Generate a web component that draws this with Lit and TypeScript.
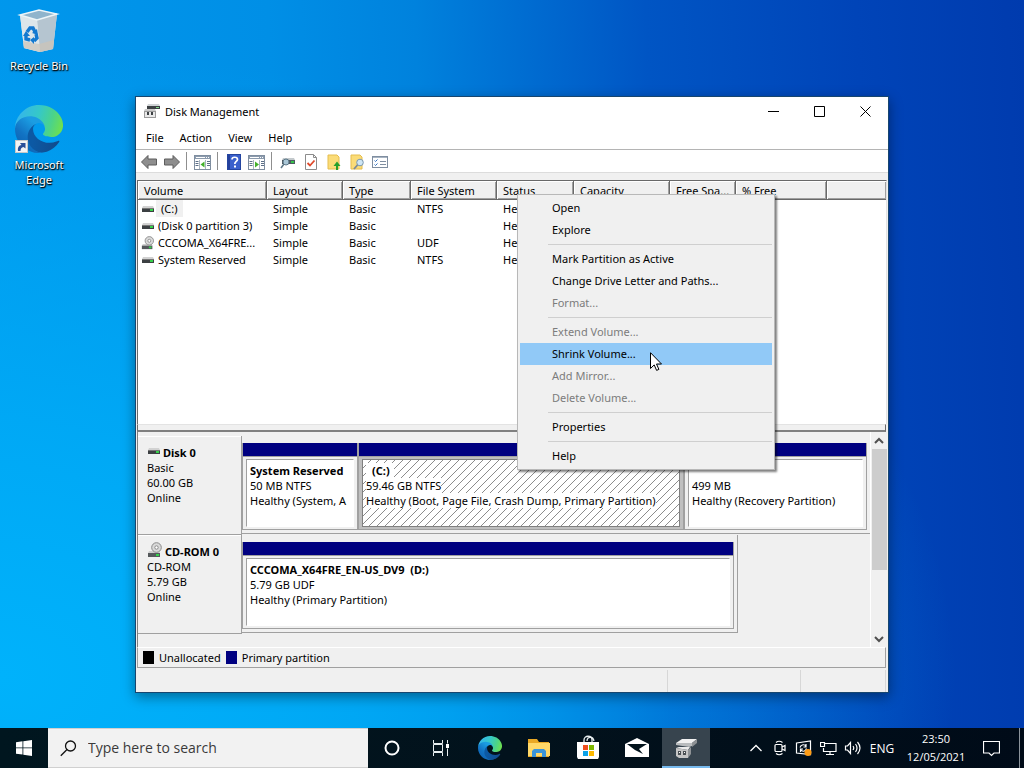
import { LitElement, html, css, nothing } from "lit";
import { customElement } from "lit/decorators.js";
import { classMap } from "lit/directives/class-map.js";

interface Volume { name: string; layout: string; type: string; fs: string; status: string; optical?: boolean; selected?: boolean; }
interface MenuEntry { label: string; disabled?: boolean; active?: boolean; }
interface Partition { title: string; lines: string[]; selected?: boolean; }

const volumes: Volume[] = [
  { name: "(C:)", layout: "Simple", type: "Basic", fs: "NTFS", status: "He", selected: true },
  { name: "(Disk 0 partition 3)", layout: "Simple", type: "Basic", fs: "", status: "He" },
  { name: "CCCOMA_X64FRE...", layout: "Simple", type: "Basic", fs: "UDF", status: "He", optical: true },
  { name: "System Reserved", layout: "Simple", type: "Basic", fs: "NTFS", status: "He" },
];

const columns = ["Volume", "Layout", "Type", "File System", "Status", "Capacity", "Free Spa...", "% Free", ""];

const contextMenu: MenuEntry[][] = [
  [{ label: "Open" }, { label: "Explore" }],
  [{ label: "Mark Partition as Active" }, { label: "Change Drive Letter and Paths..." }, { label: "Format...", disabled: true }],
  [{ label: "Extend Volume...", disabled: true }, { label: "Shrink Volume...", active: true }, { label: "Add Mirror...", disabled: true }, { label: "Delete Volume...", disabled: true }],
  [{ label: "Properties" }],
  [{ label: "Help" }],
];

const diskZero: Partition[] = [
  { title: "System Reserved", lines: ["50 MB NTFS", "Healthy (System, A"] },
  { title: "(C:)", lines: ["59.46 GB NTFS", "Healthy (Boot, Page File, Crash Dump, Primary Partition)"], selected: true },
  { title: "", lines: ["499 MB", "Healthy (Recovery Partition)"] },
];

const cdRom: Partition = { title: "CCCOMA_X64FRE_EN-US_DV9  (D:)", lines: ["5.79 GB UDF", "Healthy (Primary Partition)"] };

const driveIcon = html`<svg class="drive" width="14" height="14" viewBox="0 0 14 14" aria-hidden="true">
  <path d="M2 4h10l1 2H1z" fill="#d2d2d2"/><rect x="1" y="6" width="12" height="4" fill="#3c4043"/><rect x="1" y="6" width="12" height="1" fill="#777"/><rect x="9" y="7" width="3" height="2" fill="#35d24a"/></svg>`;

const opticalIcon = html`<svg class="drive" width="16" height="16" viewBox="0 0 16 16" aria-hidden="true">
  <path d="M2 9h10l1 2H1z" fill="#cfcfcf"/><rect x="1" y="11" width="12" height="4" fill="#55595c"/><rect x="9" y="12" width="3" height="2" fill="#35d24a"/>
  <circle cx="9.500" cy="5.500" r="4.800" fill="#dadada" stroke="#8a8a8a"/><circle cx="9.500" cy="5.500" r="1.700" fill="#fff" stroke="#8a8a8a"/></svg>`;

const edgeIcon = (size: number, id: string) => html`<svg width=${size} height=${size} viewBox="0 0 256 256" aria-hidden="true">
  <defs>
    <linearGradient id="${id}a" x1="0.2" y1="0.6" x2="1" y2="0.7"><stop offset="0" stop-color="#0c59a4"/><stop offset="1" stop-color="#114a8b"/></linearGradient>
    <linearGradient id="${id}b" x1="0.7" y1="0.3" x2="0.2" y2="1"><stop offset="0" stop-color="#1b9de2"/><stop offset="0.500" stop-color="#1273c4"/><stop offset="1" stop-color="#0a5fb0"/></linearGradient>
    <linearGradient id="${id}c" x1="0" y1="0.400" x2="1" y2="0.600"><stop offset="0" stop-color="#35b4ee"/><stop offset="0.450" stop-color="#35c8c8"/><stop offset="0.750" stop-color="#4bd38a"/><stop offset="1" stop-color="#6fe04e"/></linearGradient>
  </defs>
  <path fill="url(#${id}a)" d="M231 190.500c-3.400 1.800-6.900 3.400-10.500 4.700-11.500 4.300-23.600 6.500-35.900 6.500-47.300 0-88.500-32.500-88.500-74.300.1-11.400 6.400-21.900 16.400-27.300-42.800 1.800-53.800 46.400-53.800 72.500 0 73.900 68.100 81.400 82.800 81.400 7.900 0 19.800-2.300 27-4.600l1.300-.4c27.600-9.500 51-28.100 66.600-52.800 1.200-1.900.6-4.300-1.200-5.500-1.300-.8-2.900-.9-4.200-.2z"/>
  <path fill="url(#${id}b)" d="M105.700 241.400c-8.900-5.500-16.600-12.800-22.700-21.300-26.300-36-18.400-86.500 17.600-112.800 3.800-2.700 7.700-5.200 11.900-7.200 3.100-1.500 8.400-4.100 15.500-4 10.100.1 19.600 4.900 25.700 13 4 5.400 6.300 11.900 6.400 18.700 0-.2 24.500-79.600-80-79.600C36.200 48.200.1 89.900.1 126.500c-.2 19.300 4 38.500 12.100 56 27.600 58.800 94.800 87.600 156.400 67.200-21.100 6.600-44.100 3.600-62.900-8.300z"/>
  <path fill="url(#${id}c)" d="M152.300 148.900c-.8 1-3.300 2.500-3.300 5.700 0 2.600 1.700 5.200 4.800 7.300 14.400 10 41.500 8.700 41.600 8.700 10.700 0 21.100-2.900 30.300-8.300 18.800-11 30.400-31.100 30.500-52.900.3-22.400-8-37.300-11.300-43.900C223.500 23.900 177.700 0 128 0 58 0 1 56.200.1 126.200c.5-36.500 36.800-66 80-66 3.500 0 23.500.3 42 10.100 16.300 8.600 24.900 19 30.800 29.300 6.200 10.700 7.300 24.100 7.300 29.500 0 5.300-2.700 13.300-7.900 19.800z"/>
</svg>`;

const recycleIcon = html`<svg width="48" height="48" viewBox="0 0 48 48" aria-hidden="true">
  <path d="M5 9 22 14 42 8 38 43 25 46 9 42z" fill="#dfe6ea"/>
  <path d="M22 14 42 8 38 43 25 46z" fill="#b5c5d0"/>
  <path d="M5 9 22 14 25 46 9 42z" fill="#dde6ea"/>
  <path d="M5 9 24 4 42 8 22 14z" fill="#8fb4cc" stroke="#edf5f8" stroke-width="1.500"/>
  <path d="M8 35 24 38 39 34 38 43 25 46 9 42z" fill="#cdc3b6" opacity=".7"/>
  <g fill="none" stroke="#1379d0" stroke-width="3.400"><path d="m12 26 3-4 3 0 2 4"/><path d="m21 28 1 4-3 3"/><path d="m15 34-4-1 0-4"/></g>
  <path d="m17 27 5-4 1 6zM19 31v7l-4-4zM8 30l3-5 4 5z" fill="#1379d0"/>
</svg>`;

const arrow = (flip: boolean) => html`<svg width="18" height="16" viewBox="0 0 18 16" aria-hidden="true">
  <path transform=${flip ? "translate(18 0) scale(-1 1)" : ""} d="M1.500 8 8 1.500V5h8.500v6H8v3.500z" fill="#8e8e8e" stroke="#5d5d5d"/></svg>`;

const paneIcon = (right: boolean) => html`<svg width="17" height="16" viewBox="0 0 17 16" aria-hidden="true">
  <rect x=".5" y="1.500" width="16" height="14" fill="#fff" stroke="#7f8ea0"/><rect x="1" y="2" width="15" height="3" fill="#8c9bad"/><path d="M2 3.500h9M12 3.500h1M14 3.500h1" stroke="#fff"/>
  <path d="M5.500 6v9M11.500 6v9" stroke="#a9b4c0"/><path d="M1.500 7.500h3M1.500 9.500h3M1.500 11.500h3M13 7.500h3M13 9.500h3M13 11.500h3" stroke="#5c6f87"/>
  <path d=${right ? "M7 7.500l4 3-4 3z" : "M10.500 7.500l-4 3 4 3z"} fill="#43b02a"/></svg>`;

const tools = [
  [{ label: "Back", icon: arrow(false) }, { label: "Forward", icon: arrow(true) }],
  [{ label: "Show/Hide Console Tree", icon: paneIcon(false) }],
  [
    { label: "Help", icon: html`<svg width="14" height="16" viewBox="0 0 14 16" aria-hidden="true"><rect x=".5" y=".5" width="13" height="15" fill="#3a60cc" stroke="#2445a0"/><path d="M1 1h2v14H1z" fill="#24409c"/><path d="M5 5.500C5 2.500 10.500 2.500 10.500 5.500c0 2-2.700 2-2.700 4.500" fill="none" stroke="#fff" stroke-width="1.700"/><rect x="7" y="11.500" width="2" height="2" fill="#fff"/></svg>` },
    { label: "Show/Hide Action Pane", icon: paneIcon(true) },
  ],
  [
    { label: "Refresh", icon: html`<svg width="16" height="16" viewBox="0 0 16 16" aria-hidden="true"><path d="M3 4h11l1 2H2z" fill="#c3c9cc"/><rect x="2" y="6" width="13" height="4" fill="#4d5960"/><rect x="11" y="7" width="3" height="2" fill="#35c24a"/><circle cx="6" cy="8" r="3" fill="#a9c6d6" stroke="#5d7787"/><path d="m4 10-3 4" stroke="#5d7787" stroke-width="1.600"/></svg>` },
    { label: "Check", icon: html`<svg width="14" height="16" viewBox="0 0 14 16" aria-hidden="true"><path d="M1.500.5h8l3 3v12h-11z" fill="#fff" stroke="#8c8c8c"/><path d="M9.500.5v3h3" fill="none" stroke="#8c8c8c"/><path d="m3.500 9 2.500 2.500 4.500-5" fill="none" stroke="#e04a2b" stroke-width="1.800"/></svg>` },
    { label: "Up", icon: html`<svg width="14" height="16" viewBox="0 0 14 16" aria-hidden="true"><path d="M1 1h9l2 2v12H1z" fill="#fbdc78" stroke="#e5bd4e"/><path d="M9 16v-4H6.500L10 7.500l3.500 4.500H11v4z" fill="#27a02c"/></svg>` },
    { label: "Find", icon: html`<svg width="16" height="16" viewBox="0 0 16 16" aria-hidden="true"><path d="M2 1h9l2 2v12H2z" fill="#fbdc78" stroke="#e5bd4e"/><circle cx="11" cy="8.500" r="3.300" fill="#cfe6f5" stroke="#7c98ae"/><path d="M8.500 11 5 15" stroke="#7c8a99" stroke-width="1.800"/></svg>` },
    { label: "Properties", icon: html`<svg width="16" height="14" viewBox="0 0 16 14" aria-hidden="true"><rect x=".5" y="1.500" width="15" height="11" fill="#fff" stroke="#7f8ea0"/><path d="M1 2.500h14" stroke="#a8b4c2"/><path d="m2.500 5.500 1 1 2-2M2.500 9.500l1 1 2-2" fill="none" stroke="#2d6fc0"/><path d="M8 6.500h6M8 9.500h6" stroke="#7f8ea0"/></svg>` },
  ],
];

const diskManagementIcon = html`<svg width="16" height="16" viewBox="0 0 16 16" aria-hidden="true">
  <path d="M4 1h11l1 2H3z" fill="#d0d3d5"/><rect x="3" y="3" width="13" height="3" fill="#3c4043"/><rect x="12" y="4" width="3" height="1" fill="#7fd98a"/>
  <path d="M1 6h10l1 2H0z" fill="#c9c9c9"/><path d="M0 8h12v7H0z" fill="#9b9b9b"/><path d="M1 9h10v5H1z" fill="#e9e9e9"/><path d="M3 9h2v3H3zM7 9h2v3H7z" fill="#3c4043"/></svg>`;

const chevron = (d: string) => html`<svg width="10" height="8" viewBox="0 0 10 8" aria-hidden="true"><path d=${d} fill="none" stroke="#505050" stroke-width="2"/></svg>`;

const taskbarApps = [
  { label: "Cortana", icon: html`<svg width="20" height="20" viewBox="0 0 20 20" aria-hidden="true"><circle cx="10" cy="10" r="6.500" fill="none" stroke="#fff" stroke-width="2"/></svg>` },
  { label: "Task View", icon: html`<svg width="18" height="18" viewBox="0 0 18 18" aria-hidden="true"><g fill="none" stroke="#e8eef0"><path d="M1.500 1v3.500h9V1M1.500 17v-3.500h9V17"/><path d="M1.500 5.500h9v7h-9zM15.500 1v3.500M15.500 9.500V17"/></g><rect x="14" y="5" width="3" height="4" fill="#fff"/></svg>` },
  { label: "Microsoft Edge", icon: edgeIcon(24, "t") },
  { label: "File Explorer", icon: html`<svg width="24" height="20" viewBox="0 0 24 20" aria-hidden="true"><path d="M1 1h9l2 3h10v15H1z" fill="#e9a825"/><path d="M1 5h22v13H1z" fill="#ffd868"/><path d="M5 19v-6l2-2h10l2 2v6h-4v-4H9v4z" fill="#3a94d8"/></svg>` },
  { label: "Microsoft Store", icon: html`<svg width="24" height="26" viewBox="0 0 24 26" aria-hidden="true"><path d="M8 8V5c0-5 8-5 8 0v3M11 6c0-5 6-5 7 0" fill="none" stroke="#e8eef0" stroke-width="1.300"/><path d="M1 7h22v15l-1 2H2l-1-2z" fill="#fff"/><rect x="7" y="10" width="5" height="5" fill="#f04e1f"/><rect x="13" y="10" width="5" height="5" fill="#7db700"/><rect x="7" y="16" width="5" height="5" fill="#0da2e8"/><rect x="13" y="16" width="5" height="5" fill="#fdb900"/></svg>` },
  { label: "Mail", icon: html`<svg width="24" height="20" viewBox="0 0 24 20" aria-hidden="true"><path d="M0 6 12 0l12 6v13H0z" fill="#fff"/><path d="M2 6h20l-8 5 4 5-8-4z" fill="#02131c"/></svg>` },
  { label: "Disk Management", active: true, icon: html`<svg width="24" height="24" viewBox="0 0 24 24" aria-hidden="true"><path d="M2 7 8 3h15l-5 4z" fill="#f1f1f1"/><path d="M2 7h16v3l-3 1L2 9z" fill="#b9bcbe"/><path d="M18 7l5-4v4l-5 4z" fill="#8d9194"/><path d="M2 12l3-1h11l-2 3z" fill="#ececec"/><path d="M2 12l12 2v8l-9 0-3-2z" fill="#c6c6c6"/><path d="M14 14l3-3v7l-3 4z" fill="#909497"/><path d="M4 15h3v4H4zM9 15h3v4H9z" fill="#4a4f53"/><path d="M5 16h1v1H5zM10 16h1v1h-1z" fill="#fff"/></svg>` },
];

const trayIcons = [
  { label: "Show hidden icons", icon: html`<svg width="14" height="10" viewBox="0 0 14 10" aria-hidden="true"><path d="m1.500 8 5.500-5.500L12.500 8" fill="none" stroke="#fff" stroke-width="1.300"/></svg>` },
  { label: "Meet Now", icon: html`<svg width="14" height="16" viewBox="0 0 14 16" aria-hidden="true"><g fill="none" stroke="#fff" stroke-width="1.200"><rect x="2" y="4.500" width="7" height="7" rx="1"/><path d="M9 7l3-1.500v5L9 9M3 2.500Q6 0 9.500 2.500M3 13.500q3 2.500 6.500 0"/></g></svg>` },
  { label: "Windows Update", icon: html`<svg width="18" height="17" viewBox="0 0 18 17" aria-hidden="true"><path d="M1.500 3 15.500 1v13.500l-14-1.500z" fill="none" stroke="#fff" stroke-width="1.200"/><path d="M5 7.500C6 4 10 4 11 6.500M11 4v3H8.500M11.500 8.500C10.500 12 7 12 5.500 9.500M5.500 12V9H8" fill="none" stroke="#fff" stroke-width="1.200"/><circle cx="13" cy="12.500" r="3.500" fill="#ff9d17"/></svg>` },
  { label: "Network", icon: html`<svg width="17" height="15" viewBox="0 0 17 15" aria-hidden="true"><g fill="none" stroke="#fff" stroke-width="1.200"><path d="M5 2.500h11v8H3.500V7M10 10.500v3M6 13.500h8"/><path d="M.5 1.500h4v4h-4z"/></g></svg>` },
  { label: "Volume", icon: html`<svg width="17" height="14" viewBox="0 0 17 14" aria-hidden="true"><g fill="none" stroke="#fff" stroke-width="1.200"><path d="M1.500 5h2l3-3.500v11L3.500 9h-2z"/><path d="M9 5q1.500 2 0 4M11.500 3q3 4 0 8M13.500 1q5 6 0 12"/></g></svg>` },
];

@customElement("app-root")
export class AppRoot extends LitElement {
  static styles = css`
    :host { display: grid; grid-template-rows: minmax(0, 1fr) 40px; height: 100vh; overflow: hidden; font: 11px/15px "Noto Sans", "Open Sans", sans-serif; color: #000;
      background: radial-gradient(ellipse at 0% 88%, #00b2fb 0%, rgba(0, 172, 247, 0.85) 25%, rgba(0, 150, 236, 0) 66%), linear-gradient(88deg, #0098ed 0%, #008fe6 28%, #0082dd 42%, #0055c4 64%, #0044b8 84%, #003bae 100%); }
    * { box-sizing: border-box; }
    svg { display: block; flex: none; }
    button { appearance: none; border: 0; margin: 0; padding: 0; background: none; font: inherit; color: inherit; }
    .desktop { position: relative; min-height: 0; }
    .shortcuts { display: flex; flex-direction: column; gap: 32px; width: 78px; padding-top: 6px; }
    .shortcut { display: flex; flex-direction: column; align-items: center; gap: 4px; color: #fff; text-align: center; text-decoration: none; text-shadow: 0 1px 2px #000, 1px 1px 1px #000; }
    .picture { position: relative; }
    .badge { position: absolute; left: 0; bottom: 0; }

    .window { position: absolute; inset: 96px 135px 35px 135px; display: flex; flex-direction: column; background: #f0f0f0; border: 1px solid #17466f; box-shadow: 0 4px 12px rgba(0, 0, 0, 0.4); }
    .titlebar { display: flex; align-items: center; height: 30px; padding-bottom: 2px; background: #fff; }
    .titlebar > svg { margin: 0 5px 0 8px; }
    .title { flex: 1; margin: 0; font: inherit; }
    .caption { display: grid; place-items: center; width: 46px; height: 28px; }
    .menubar { display: flex; height: 23px; padding-left: 2px; background: #fff; border-bottom: 1px solid #b4b4b4; }
    .menubar button { padding: 0 8px 2px; }
    .toolbar { display: flex; align-items: center; height: 23px; padding-left: 1px; background: #fff; border-bottom: 1px solid #dcdcdc; }
    .tool { display: grid; place-items: center; width: 23px; height: 22px; padding-top: 2px; }
    .rule { width: 1px; height: 18px; margin: 0 4px 0 3px; background: #8f8f8f; }

    .list { flex: 1; min-height: 0; margin: 7px 1px 0; overflow: hidden; background: #fff; border: 1px solid #696969; border-right-color: #e3e3e3; border-bottom: 0; }
    table { width: 100%; table-layout: fixed; border-collapse: separate; border-spacing: 0; }
    th, td { padding: 0 0 0 6px; overflow: hidden; text-align: left; font-weight: 400; white-space: nowrap; }
    th { height: 19px; background: #f0f0f0; border-right: 1px solid #696969; border-bottom: 1px solid #696969; box-shadow: inset 1px 1px #fff, inset -1px -1px #a0a0a0; }
    th:last-child { border-right: 0; }
    td { height: 17px; }
    td:first-child { padding-left: 3px; }
    .volume { display: flex; align-items: center; gap: 3px; height: 17px; }
    .volume .drive { width: 14px; height: 14px; }
    .volume.selected { gap: 1px; }
    .volume.selected span { padding: 1px 5px; background: #f0f0f0; }
    .c1 { width: 129px; } .c2 { width: 76px; } .c3 { width: 68px; } .c4 { width: 86px; } .c5 { width: 77px; } .c6 { width: 96px; } .c7 { width: 66px; } .c8 { width: 91px; }

    .splitter { height: 8px; margin: 0 2px 0 1px; border-right: 1px solid #696969; border-bottom: 2px solid #808080; border-top: 1px solid #e3e3e3; border-left: 1px solid #696969; }
    .graph { display: flex; height: 215px; margin: 0 1px; border-left: 1px solid #808080; }
    .disks { flex: 1; min-width: 0; padding-top: 4px; }
    .disk { display: flex; height: 99px; }
    .disk-label { width: 104px; flex: none; padding: 9px 0 0 9px; border-right: 1px solid #a0a0a0; border-bottom: 1px solid #a0a0a0; box-shadow: inset 0 1px #fff; }
    .disk-label p { margin: 0; }
    .disk-name { display: flex; align-items: center; gap: 2px; height: 15px; font-weight: 700; }
    .disk-name .drive { margin-bottom: 4px; }
    .extent { display: grid; grid-template-rows: minmax(0, 1fr); height: 98px; padding: 7px 3px 3px 0; border-bottom: 1px solid #a0a0a0; }
    .extent.full { flex: 1; min-width: 0; grid-template-columns: 116px minmax(0, 1fr) 183px; }
    .extent.single { width: 496px; border-right: 1px solid #a0a0a0; }
    .partition { display: flex; flex-direction: column; min-width: 0; min-height: 0; border: 1px solid #a0a0a0; border-width: 0 1px 1px 1px; }
    .stripe { height: 13px; flex: none; background: #000080; }
    .frame { flex: 1; min-height: 0; display: flex; flex-direction: column; border-top: 1px solid #a0a0a0; }
    .body { flex: 1; min-height: 0; margin: 2px 3px; padding: 3px 0 0 3px; overflow: hidden; background: #fff; border: 1px solid #a0a0a0; border-color: #a0a0a0 #fff #fff #a0a0a0; }
    .body p { height: 15px; margin: 0; white-space: pre; }
    .selected .frame { background: #bfbfbf; }
    .selected .body { border-color: #808080; background: linear-gradient(135deg, transparent 45%, #8c8c8c 45%, #8c8c8c 55%, transparent 55%) 0 0 / 8px 8px #fff; }
    .selected .body span { background: #fff; }
    .partition-title { font-weight: 700; }
    .selected .partition-title { padding: 0 4px 0 6px; }
    .scrollbar { display: flex; flex-direction: column; align-items: center; width: 17px; border-left: 1px solid #fff; }
    .scrollbar button { display: grid; place-items: center; width: 16px; height: 17px; }
    .thumb { width: 15px; height: 121px; background: #cdcdcd; }
    .spacer { flex: 1; }
    .legend { display: flex; align-items: center; gap: 5px; height: 21px; margin: 0 2px 0 1px; padding: 0 0 1px 5px; border: 1px solid #a0a0a0; border-top: 1px solid #fff; }
    .swatch { width: 11px; height: 13px; background: #000; }
    .swatch.primary { background: #000080; }
    .statusbar { display: flex; height: 24px; padding-top: 2px; }
    .statusbar span { border-right: 1px solid #d7d7d7; }
    .s1 { flex: 1; } .s2 { width: 133px; } .s3 { width: 85px; margin-right: 2px; }

    .context { position: absolute; left: 381px; top: 97px; width: 258px; padding: 2px; background: #f0f0f0; border: 1px solid #b8b8b8; box-shadow: 2px 2px 2px rgba(0, 0, 0, 0.5); }
    .context button { display: block; width: 100%; height: 22px; padding: 0 0 2px 32px; text-align: left; }
    .context button:disabled { color: #7c7c7c; }
    .context .active { background: #91c9f7; }
    .context hr { height: 1px; margin: 3px 0 3px 28px; border: 0; background: #cfcfcf; }
    .cursor { position: absolute; left: 514px; top: 255px; }

    .taskbar { display: flex; font-family: "Open Sans", "Noto Sans", sans-serif; color: #fff; background: linear-gradient(90deg, #00161f, #02121c 50%, #000b18); }
    .start { display: grid; place-items: center; width: 48px; }
    .search { display: flex; align-items: center; gap: 11px; width: 320px; padding-left: 12px; background: #f2f2f2; border: 1px solid #d0d0d0; border-width: 1px 0; }
    .search input { flex: 1; min-width: 0; padding: 0; border: 0; outline: 0; background: none; font: 14px/20px "Open Sans", "Noto Sans", sans-serif; }
    .search input::placeholder { color: #3a3a3a; opacity: 1; }
    .apps { display: flex; flex: 1; gap: 1px; }
    .app { display: grid; place-items: center; width: 48px; }
    .app.active { background: #37444e; border-bottom: 2px solid #76b9ed; border-top: 2px solid #37444e; }
    .tray { display: flex; align-items: center; }
    .tray-item { display: grid; place-items: center; width: 24px; height: 40px; }
    .language { width: 36px; font-size: 12px; text-align: center; }
    .clock { width: 72px; line-height: 18px; text-align: center; }
    .notice { display: grid; place-items: center; width: 38px; height: 40px; }
    .peek { width: 5px; height: 40px; margin-left: 9px; border-left: 1px solid #8b939b; }
  `;

  private renderPartition(p: Partition) {
    return html`<section class=${classMap({ partition: true, selected: !!p.selected })}>
      <div class="stripe"></div>
      <div class="frame"><div class="body">
        <p><span class="partition-title">${p.title}</span></p>
        ${p.lines.map((line) => html`<p><span>${line}</span></p>`)}
      </div></div>
    </section>`;
  }

  private renderDiskLabel(icon: unknown, name: string, lines: string[]) {
    return html`<div class="disk-label"><p class="disk-name">${icon}<span>${name}</span></p>${lines.map((line) => html`<p>${line}</p>`)}</div>`;
  }

  private renderWindow() {
    return html`<main class="window">
      <header class="titlebar">
        ${diskManagementIcon}
        <h1 class="title">Disk Management</h1>
        <button class="caption" aria-label="Minimize"><svg width="11" height="11" viewBox="0 0 11 11"><path d="M0 5.500h11" stroke="#000"/></svg></button>
        <button class="caption" aria-label="Maximize"><svg width="11" height="11" viewBox="0 0 11 11"><path d="M.5.5h10v10H.5z" fill="none" stroke="#000"/></svg></button>
        <button class="caption" aria-label="Close"><svg width="11" height="11" viewBox="0 0 11 11"><path d="m.5.5 10 10M10.500.5l-10 10" stroke="#000"/></svg></button>
      </header>
      <nav class="menubar">${["File", "Action", "View", "Help"].map((m) => html`<button>${m}</button>`)}</nav>
      <div class="toolbar" role="toolbar">
        ${tools.map((group, i) => html`${i ? html`<span class="rule"></span>` : nothing}${group.map((t) => html`<button class="tool" aria-label=${t.label}>${t.icon}</button>`)}`)}
      </div>
      <div class="list">
        <table>
          <colgroup><col class="c1" /><col class="c2" /><col class="c3" /><col class="c4" /><col class="c5" /><col class="c6" /><col class="c7" /><col class="c8" /><col /></colgroup>
          <thead><tr>${columns.map((c) => html`<th>${c}</th>`)}</tr></thead>
          <tbody>${volumes.map((v) => html`<tr>
            <td><div class=${classMap({ volume: true, selected: !!v.selected })}>${v.optical ? opticalIcon : driveIcon}<span>${v.name}</span></div></td>
            <td>${v.layout}</td><td>${v.type}</td><td>${v.fs}</td><td>${v.status}</td><td></td><td></td><td></td><td></td>
          </tr>`)}</tbody>
        </table>
      </div>
      <div class="splitter"></div>
      <div class="graph">
        <div class="disks">
          <div class="disk">
            ${this.renderDiskLabel(driveIcon, "Disk 0", ["Basic", "60.00 GB", "Online"])}
            <div class="extent full">${diskZero.map((p) => this.renderPartition(p))}</div>
          </div>
          <div class="disk">
            ${this.renderDiskLabel(opticalIcon, "CD-ROM 0", ["CD-ROM", "5.79 GB", "Online"])}
            <div class="extent single">${this.renderPartition(cdRom)}</div>
          </div>
        </div>
        <div class="scrollbar">
          <button aria-label="Scroll up">${chevron("m1 6 4-4 4 4")}</button>
          <div class="thumb"></div><div class="spacer"></div>
          <button aria-label="Scroll down">${chevron("m1 2 4 4 4-4")}</button>
        </div>
      </div>
      <div class="legend"><span class="swatch"></span><span>Unallocated</span><span class="swatch primary"></span><span>Primary partition</span></div>
      <footer class="statusbar"><span class="s1"></span><span class="s2"></span><span class="s3"></span></footer>
      <div class="context" role="menu">
        ${contextMenu.map((group, i) => html`${i ? html`<hr />` : nothing}${group.map((e) => html`<button role="menuitem" class=${classMap({ active: !!e.active })} ?disabled=${!!e.disabled}>${e.label}</button>`)}`)}
      </div>
      <svg class="cursor" width="12" height="19" viewBox="0 0 12 19" aria-hidden="true"><path d="M.5.7v15.800l3.700-3.600 2.400 5.500 2.300-1-2.400-5.400h5z" fill="#fff" stroke="#000"/></svg>
    </main>`;
  }

  render() {
    return html`
      <div class="desktop">
        <nav class="shortcuts">
          <a class="shortcut" href="#recycle-bin"><span class="picture">${recycleIcon}</span><span>Recycle Bin</span></a>
          <a class="shortcut" href="#edge"><span class="picture">${edgeIcon(48, "d")}
            <svg class="badge" width="13" height="13" viewBox="0 0 13 13" aria-hidden="true"><rect x=".5" y=".5" width="12" height="12" fill="#f4f4f4" stroke="#c8c8c8"/><path d="M3 11c-.5-4 1-5.500 3.500-6L5 3h5.500v5.500L8.500 7C6.500 7.500 5.500 8.500 5.500 11z" fill="#2a4f98"/></svg></span>
            <span>Microsoft<br />Edge</span></a>
        </nav>
        ${this.renderWindow()}
      </div>
      <footer class="taskbar">
        <button class="start" aria-label="Start"><svg width="16" height="16" viewBox="0 0 16 16"><path d="M0 2.200 6.500 1.300v6.200H0zM7.300 1.200 16 0v7.500H7.300zM0 8.300h6.500v6.300L0 13.700zM7.300 8.300H16V16l-8.700-1.200z" fill="#fff"/></svg></button>
        <label class="search"><svg width="17" height="17" viewBox="0 0 17 17" aria-hidden="true"><circle cx="10.500" cy="6" r="5" fill="none" stroke="#111" stroke-width="1.300"/><path d="M7 9.500.8 15.800" stroke="#111" stroke-width="1.300"/></svg><input type="text" aria-label="Search" placeholder="Type here to search" /></label>
        <div class="apps">${taskbarApps.map((a) => html`<button class=${classMap({ app: true, active: !!a.active })} aria-label=${a.label}>${a.icon}</button>`)}</div>
        <div class="tray">
          ${trayIcons.map((t) => html`<button class="tray-item" aria-label=${t.label}>${t.icon}</button>`)}
          <button class="language">ENG</button>
          <button class="clock">23:50<br />12/05/2021</button>
          <button class="notice" aria-label="Notifications"><svg width="17" height="17" viewBox="0 0 17 17"><path d="M.5 1.500h16v11.500H11l-2.500 2.500L6 13H.5z" fill="none" stroke="#fff" stroke-width="1.200"/></svg></button>
          <span class="peek"></span>
        </div>
      </footer>`;
  }
}
